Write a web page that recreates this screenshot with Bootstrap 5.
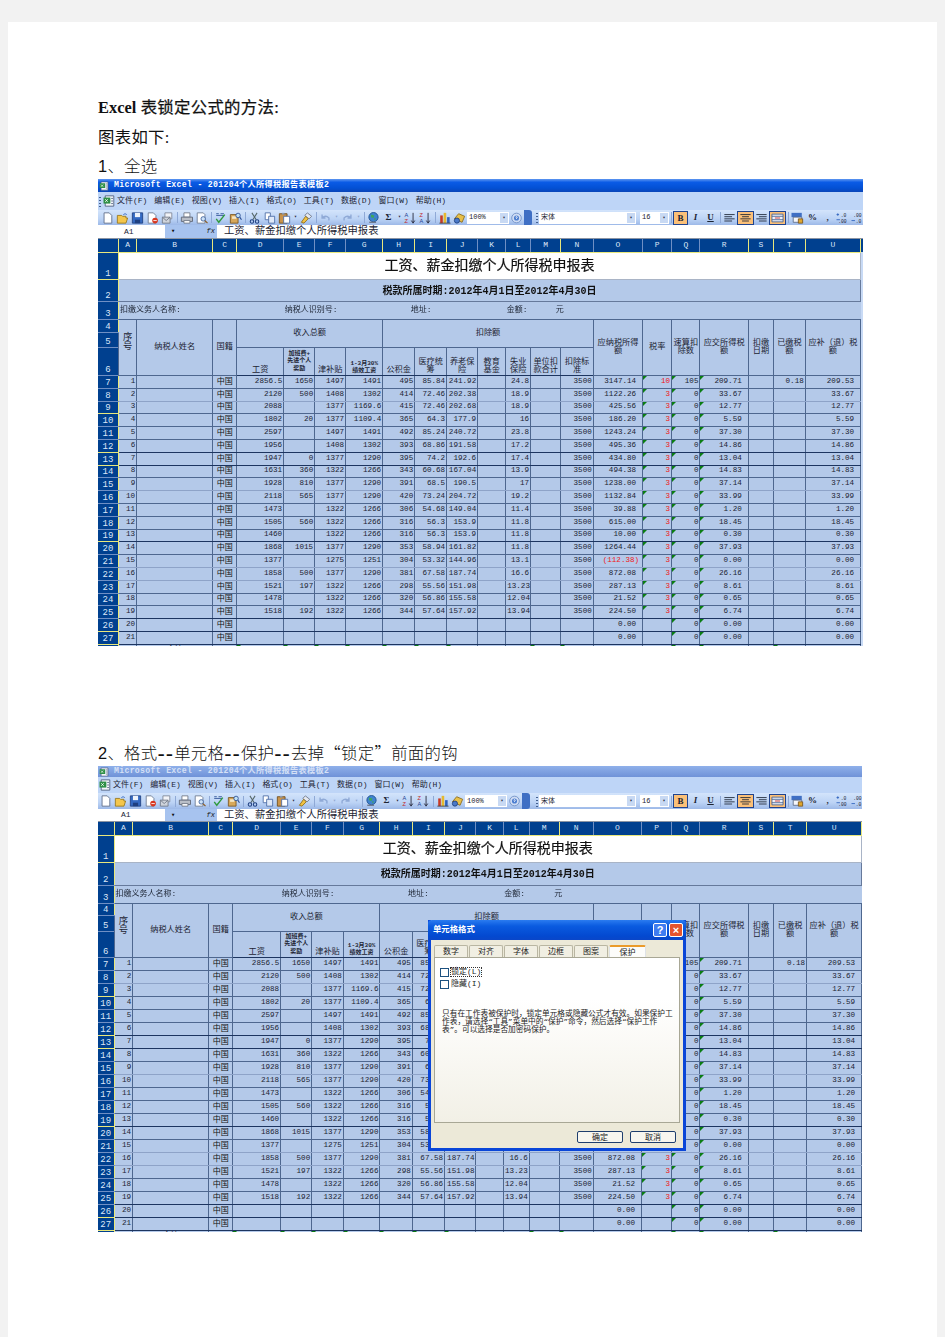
<!DOCTYPE html>
<html lang="zh-CN">

<head>
    <meta charset="UTF-8">
    <meta name="viewport" content="width=device-width, initial-scale=1.0">
    <title>Excel表锁定公式的方法</title>

    <link rel="stylesheet" href="https://cdn.jsdelivr.net/npm/bootstrap@5.3.0/dist/css/bootstrap.min.css">

    <style>
        body {
            background-color: #f2f2f2;
            font-family: "Liberation Serif", "Noto Sans CJK SC", serif;
            color: #111;
        }

        .doc-page {
            margin: 22px 8px 0;
            padding: 71px 0 0 90px;
            min-height: 1315px;
        }

        .doc-line {
            font-size: 16.4px;
            line-height: 30px;
            letter-spacing: .3px;
            margin: 0;
        }

        .doc-line b {
            letter-spacing: 0;
        }

        .doc-heavy {
            -webkit-text-stroke: .25px #111;
        }

        .doc-step {
            line-height: 26px;
            font-family: "Liberation Sans", "Noto Sans CJK SC", sans-serif;
            font-weight: 300;
        }

        .doc-gap {
            margin-top: 93px;
        }

        .doc-dash {
            font-size: 22px;
            line-height: 0;
            letter-spacing: 1px;
            vertical-align: -2px;
        }

        .doc-cjk {
            font-family: "Noto Sans CJK SC", sans-serif;
        }

        /* the two pasted screenshots */
        .xl-shot {
            width: 765px;
            height: 467px;
            font-family: "Liberation Mono", "Noto Sans CJK SC", monospace;
            font-size: 8px;
            line-height: 1;
            color: #1c2433;
            filter: blur(0.3px);
        }

        .xl-shot-b {
            width: 764px;
            height: 466px;
        }

        .xl-title {
            height: 13px;
            padding-left: 1px;
            background: linear-gradient(#5f97f0, #0a5be6 25%, #0350d4 70%, #0a45b8);
            color: #fff;
            font-weight: 700;
            font-size: 8.2px;
            letter-spacing: .3px;
        }

        .xl-shot-b .xl-title {
            height: 11px;
            background: linear-gradient(#8fb0ea, #6f92d8);
            color: #d5e0f6;
        }

        .xl-menu {
            height: 18px;
            background: #bed5f7;
        }

        .xl-shot-b .xl-menu {
            height: 16px;
        }

        .xl-shot-b .xl-menu .xl-grip {
            display: none;
        }

        .xl-menu-item {
            width: 37.35px;
            flex: none;
            white-space: nowrap;
        }

        .xl-tools {
            height: 15px;
            background: linear-gradient(#d3e4fb, #bcd3f5 60%, #9db9e8);
        }

        .xl-shot-b .xl-tools {
            height: 16px;
        }

        .xl-tl {
            width: 437px;
            padding-left: 2px;
            flex: none;
        }

        .xl-shot-b .xl-tl {
            padding-left: 0;
        }

        .xl-ic {
            width: 15px;
            height: 12px;
            flex: none;
        }

        .xl-dd {
            width: 7px;
            flex: none;
            text-align: center;
            font-size: 5px;
            color: #223;
        }

        .xl-off {
            color: #8ea6cf;
        }

        .xl-sep {
            width: 4px;
            height: 11px;
            flex: none;
            background: linear-gradient(#8fa9d6, #8fa9d6) center/1px 100% no-repeat;
        }

        .xl-box {
            height: 12px;
            flex: none;
            background: #fff;
            padding-left: 2px;
            font-size: 7px;
        }

        .xl-box i {
            width: 8px;
            height: 10px;
            margin-left: auto;
            margin-right: 1px;
            background: #c8d9f3;
            font-style: normal;
            font-size: 5px;
            text-align: center;
            line-height: 10px;
        }

        .xl-chev {
            width: 8px;
            height: 16px;
            flex: none;
            background: #3f6fc4;
            border-radius: 0 3px 3px 0;
        }

        .xl-grip {
            width: 4px;
            height: 11px;
            flex: none;
            background: radial-gradient(circle, #44608f 0.7px, transparent 1px) center top/2px 3px repeat-y;
        }

        .xl-tb {
            width: 15px;
            height: 14px;
            flex: none;
            text-align: center;
            font: 700 9px/13px "Liberation Serif", serif;
            color: #1c2433;
        }

        .xl-on {
            background: #fbc078;
            border: 1px solid #20448f;
        }

        .xl-formula {
            height: 14px;
            background: #fff;
            border-bottom: 1px solid #8b94a3;
        }

        .xl-shot-b .xl-formula {
            height: 13px;
        }

        .xl-name {
            width: 67px;
            padding-left: 26px;
            font-size: 8px;
            flex: none;
        }

        .xl-shot-b .xl-name {
            padding-left: 23px;
        }

        .xl-fx {
            width: 52px;
            flex: none;
            height: 100%;
            background: #a7c3ef;
            padding: 0 2px 0 6px;
            font-size: 7px;
            font-style: italic;
            color: #111;
        }

        .xl-ftext {
            padding-left: 7px;
            font-size: 10.3px;
            font-family: "Liberation Sans", "Noto Sans CJK SC", sans-serif;
            white-space: nowrap;
        }

        /* sheet grid */
        .xl-grid {
            table-layout: fixed;
            width: 100%;
            background: #b4c9e9;
        }

        .xl-grid td {
            padding: 0 1px;
            border: 1px solid #4e678f;
            overflow: hidden;
            white-space: nowrap;
            text-align: right;
            position: relative;
            font-size: 7.6px;
        }

        .xl-grid th {
            padding: 0;
            background: #00408f;
            color: #dbe6f7;
            font-weight: 400;
            font-size: 8px;
            text-align: center;
            overflow: hidden;
        }

        .xl-letter {
            border-right: 1px solid #6f8fc4;
            border-bottom: 1px solid #e9e87c;
        }

        .xl-hot {
            border-right-color: #e9e87c;
        }

        .xl-rh {
            border-right: 1px solid #e9e87c;
            border-bottom: 1px solid #6f8fc4;
            font-size: 9px !important;
            vertical-align: bottom;
        }

        .xl-rh.xl-hot {
            border-bottom-color: #e9e87c;
        }

        .xl-grid td.xl-tail {
            background: #c8daf5;
            border: 0;
            padding: 0;
        }

        .xl-grid td.xl-head {
            text-align: center;
            font-size: 8.2px;
            white-space: normal;
        }

        .xl-grid td.xl-seq {
            font-size: 9.4px;
            padding: 13px 0 0;
            vertical-align: top;
        }

        .xl-grid td.xl-low {
            vertical-align: bottom;
        }

        .xl-grid td.xl-tiny {
            font-size: 6px;
            font-weight: 700;
            line-height: 1.2;
            padding: 0;
        }

        .xl-grid td.xl-banner {
            background: #fff;
            text-align: center;
            font-size: 14px;
            border-color: #a9b4c6;
            color: #111;
            -webkit-text-stroke: .2px #111;
        }

        .xl-grid td.xl-period {
            text-align: center;
            font-size: 10px;
            font-weight: 700;
            border-color: #66799b;
            color: #111;
            padding-top: 3px;
        }

        .xl-grid td.xl-info {
            text-align: left;
            font-size: 8px;
            border-left: 0;
            border-right: 0;
        }

        .xl-grid td.xl-indent-a {
            padding-left: 28px;
        }

        .xl-grid td.xl-indent-b {
            padding-left: 25px;
        }

        .xl-grid td.xl-cn {
            text-align: center;
            font-size: 8px;
            color: #111;
        }

        .xl-grid td.xl-pad {
            padding-right: 6px;
        }

        .xl-grid td.xl-paren {
            padding-right: 3px;
        }

        .xl-grid td.xl-red {
            color: #f01818;
        }

        .xl-grid td.xl-mark::before {
            content: "";
            position: absolute;
            left: 0;
            top: 0;
            border: 2px solid transparent;
            border-color: #0a7d12 transparent transparent #0a7d12;
        }

        .xl-line-dark td {
            border-bottom-color: #1d3560;
        }

        .xl-line-pale td {
            border-bottom-color: #8ea3c8;
        }

        /* cell format dialog */
        .xl-dialog {
            left: 330px;
            top: 154px;
            width: 258px;
            height: 231px;
            background: #ece9d8;
            border: 3px solid #0a46d8;
            border-top: 0;
            color: #222;
        }

        .xl-dlg-title {
            height: 20px;
            margin: 0 -3px;
            padding: 0 3px 0 5px;
            border-radius: 4px 4px 0 0;
            background: linear-gradient(#2a7bf0, #0a5be0 30%, #0349d0 80%, #0a46c8);
            color: #fff;
            font-weight: 700;
            font-size: 8.4px;
        }

        .xl-dlg-btn {
            width: 14px;
            height: 14px;
            border: 1px solid #fff;
            border-radius: 2px;
            margin-left: 2px;
            background: #3f7cf0;
            text-align: center;
            font: 700 11px/12px "Liberation Sans", sans-serif;
        }

        .xl-dlg-x {
            background: #e5552e;
        }

        .xl-dialog .nav-tabs {
            margin: 5px 3px 0 3px;
            border-bottom: 0;
            gap: 1px;
        }

        .xl-dialog .nav-link {
            width: 34px;
            height: 12px;
            padding: 0;
            margin: 0;
            border: 1px solid #b9b6a2;
            border-bottom: 0;
            border-radius: 2px 2px 0 0;
            background: #f1efe3;
            color: #222;
            font-size: 8px;
            line-height: 11px;
            text-align: center;
        }

        .xl-dialog .nav-link.active {
            width: 37px;
            background: #fcfcfa;
            border-top: 2px solid #ea9b2b;
            color: #222;
        }

        .xl-panel {
            height: 166px;
            margin: 0 3px;
            padding: 8px 4px 0 5px;
            border: 1px solid #a8a795;
            background: linear-gradient(#fff, #fff 25%, #f2f0e6);
        }

        .xl-check {
            height: 12px;
            font-size: 8px;
        }

        .xl-check .form-check-input {
            width: 9px;
            height: 9px;
            margin: 0 2px 0 0;
            border: 1px solid #1c5180;
            border-radius: 0;
        }

        .xl-dashed {
            outline: 1px dotted #333;
        }

        .xl-note {
            margin: 20px 0 0 2px;
            font-size: 7.7px;
            line-height: 1.05;
            white-space: normal;
        }

        .xl-dlg-foot {
            margin: 8px 7px 0 3px;
            gap: 7px;
        }

        .xl-dlg-foot .btn {
            width: 46px;
            height: 12px;
            padding: 0;
            font-size: 8px;
            line-height: 9px;
            background: #f7f6ef;
            color: #222;
            border: 1px solid #1f3f6e;
            border-radius: 2px;
        }
    </style>
</head>

<body>

    <svg width="0" height="0" class="position-absolute">
        <defs>
            <symbol id="i-new" viewBox="0 0 16 14"><path d="M4 1h6l3 3v9H4z" fill="#fff" stroke="#5b6a86"/></symbol>
            <symbol id="i-open" viewBox="0 0 16 14"><path d="M2 4h5l1 1h4v2h2l-2 6H2z" fill="#f4c64c" stroke="#96761c"/><path d="M9 3q2-2 4 0" fill="none" stroke="#2e62bd"/></symbol>
            <symbol id="i-save" viewBox="0 0 16 14"><path d="M2 1h12v12H2z" fill="#3469c2" stroke="#1e3f80"/><path d="M5 1h6v5H5z" fill="#eef3fb"/><path d="M5 9h6v4H5z" fill="#1e3f80"/></symbol>
            <symbol id="i-perm" viewBox="0 0 16 14"><path d="M3 1h6l3 3v9H3z" fill="#fff" stroke="#6b7890"/><circle cx="11" cy="10" r="3.3" fill="#d8361f"/><path d="M9 10h4" stroke="#fff"/></symbol>
            <symbol id="i-mail" viewBox="0 0 16 14"><path d="M5 1h8v7H5z" fill="#f2f4f8" stroke="#7e8796"/><path d="M2 6h9v7H2z" fill="#cfd4dc" stroke="#6f7785"/><path d="M2 6l4.5 4L11 6" fill="none" stroke="#6f7785"/></symbol>
            <symbol id="i-print" viewBox="0 0 16 14"><path d="M5 1h7v5H5z" fill="#fff" stroke="#6f7785"/><path d="M2 6h13v5H2z" fill="#b9bec7" stroke="#5c6473"/><path d="M5 10h7v3H5z" fill="#fff" stroke="#6f7785"/></symbol>
            <symbol id="i-preview" viewBox="0 0 16 14"><path d="M3 1h7l2 2v10H3z" fill="#fff" stroke="#6b7890"/><circle cx="10" cy="8" r="2.6" fill="#cfe3f7" stroke="#3b5f9b"/><path d="M12 10l3 3" stroke="#8b5a1f" stroke-width="1.4"/></symbol>
            <symbol id="i-spell" viewBox="0 0 16 14"><path d="M3 2h3M8 2h4M3 4h9" stroke="#2b4f94"/><path d="M3 8l3 4 7-9" fill="none" stroke="#2f9a3d" stroke-width="1.6"/></symbol>
            <symbol id="i-research" viewBox="0 0 16 14"><path d="M2 3h9v10H2z" fill="#d7a85a" stroke="#7a5520"/><path d="M4 5h5v3H4z" fill="#f5e7c5"/><circle cx="11" cy="4" r="2.6" fill="#bfe0f5" stroke="#2b4f94"/><path d="M13 6l2 3" stroke="#2b4f94" stroke-width="1.3"/></symbol>
            <symbol id="i-cut" viewBox="0 0 16 14"><path d="M5 1l5 8M11 1L6 9" stroke="#566" stroke-width="1.2"/><circle cx="5" cy="11" r="2" fill="none" stroke="#1e3f80" stroke-width="1.2"/><circle cx="11" cy="11" r="2" fill="none" stroke="#1e3f80" stroke-width="1.2"/></symbol>
            <symbol id="i-copy" viewBox="0 0 16 14"><path d="M3 1h6v8H3z" fill="#fff" stroke="#4a6aa5"/><path d="M7 5h7v8H7z" fill="#dfe9f8" stroke="#4a6aa5"/></symbol>
            <symbol id="i-paste" viewBox="0 0 16 14"><path d="M2 2h9v11H2z" fill="#c9934a" stroke="#6f4d1b"/><path d="M5 1h3v2H5z" fill="#8d99ad"/><path d="M7 5h7v8H7z" fill="#fff" stroke="#4a6aa5"/></symbol>
            <symbol id="i-painter" viewBox="0 0 16 14"><path d="M9 1l5 4-3 3-5-4z" fill="#e5e8ef" stroke="#6a7589"/><path d="M7 5l3 3-5 5-3-1z" fill="#f0c142" stroke="#8f6e1a"/></symbol>
            <symbol id="i-undo" viewBox="0 0 16 14"><path d="M4 3v4h4M4 7q4-4 8 0v3" fill="none" stroke="#8fa9d6" stroke-width="1.6"/></symbol>
            <symbol id="i-redo" viewBox="0 0 16 14"><path d="M12 3v4H8M12 7q-4-4-8 0v3" fill="none" stroke="#8fa9d6" stroke-width="1.6"/></symbol>
            <symbol id="i-globe" viewBox="0 0 16 14"><circle cx="8" cy="6" r="5.4" fill="#3f83d0" stroke="#1e4f8f"/><path d="M5 3l4 1-1 3-3-1zM9 7l2 1-2 2z" fill="#3fa65a"/><path d="M3 12h8" stroke="#6a7589" stroke-width="1.5"/></symbol>
            <symbol id="i-az" viewBox="0 0 16 14"><text x="1" y="6" font-size="6.5" fill="#1f3f8f" font-family="Liberation Sans">A</text><text x="1" y="13" font-size="6.5" fill="#c02828" font-family="Liberation Sans">Z</text><path d="M11 1v11M9 10l2 3 2-3" fill="none" stroke="#223"/></symbol>
            <symbol id="i-za" viewBox="0 0 16 14"><text x="1" y="6" font-size="6.5" fill="#c02828" font-family="Liberation Sans">Z</text><text x="1" y="13" font-size="6.5" fill="#1f3f8f" font-family="Liberation Sans">A</text><path d="M11 1v11M9 10l2 3 2-3" fill="none" stroke="#223"/></symbol>
            <symbol id="i-chart" viewBox="0 0 16 14"><path d="M3 4h3v9H3z" fill="#c93a24"/><path d="M7 1h3v12H7z" fill="#e5b92f"/><path d="M11 6h3v7h-3z" fill="#2e62bd"/><path d="M2 13h13" stroke="#444"/></symbol>
            <symbol id="i-draw" viewBox="0 0 16 14"><path d="M2 8l5-6 7 3-3 7z" fill="#e8c04a" stroke="#8a6a1a"/><circle cx="5" cy="10" r="3" fill="#4a79c8" stroke="#1e3f80"/></symbol>
            <symbol id="i-help" viewBox="0 0 16 14"><circle cx="8" cy="7" r="5.6" fill="#cfdcf3" stroke="#6f8fc4"/><circle cx="8" cy="7" r="3" fill="#4d7ed0"/><path d="M7 6q1-1.4 2 0l-1 1v1" stroke="#fff" fill="none"/></symbol>
            <symbol id="i-left" viewBox="0 0 16 14"><path d="M2 3h12M2 5.5h9M2 8h12M2 10.5h9" stroke="#1c2433"/></symbol>
            <symbol id="i-center" viewBox="0 0 16 14"><path d="M2 3h12M4 5.5h8M2 8h12M4 10.5h8" stroke="#1c2433"/></symbol>
            <symbol id="i-right" viewBox="0 0 16 14"><path d="M2 3h12M5 5.5h9M2 8h12M5 10.5h9" stroke="#1c2433"/></symbol>
            <symbol id="i-merge" viewBox="0 0 16 14"><path d="M1.5 2.5h13v9h-13z" fill="#eef3fb" stroke="#44608f"/><path d="M1.5 5h13M1.5 9h13" stroke="#44608f"/><path d="M5 7h6" stroke="#c02828"/></symbol>
            <symbol id="i-format" viewBox="0 0 16 14"><path d="M1 1h12v5H1z" fill="#3f6fc4"/><path d="M3 6h10v6H3z" fill="#f4f6fb" stroke="#5b6a86"/><path d="M9 8h5v5H9z" fill="#e0a72e" stroke="#7a5520"/></symbol>
            <symbol id="i-inc" viewBox="0 0 16 14"><path d="M4 3h-3M2.5 1.5v3" stroke="#2e62bd"/><path d="M1 9h4" stroke="#2e62bd"/><text x="6" y="6" font-size="5.5" fill="#223" font-family="Liberation Mono">.0</text><text x="3" y="13" font-size="5.5" fill="#223" font-family="Liberation Mono">.00</text></symbol>
            <symbol id="i-dec" viewBox="0 0 16 14"><path d="M1 10h4" stroke="#2e62bd"/><text x="3" y="6" font-size="5.5" fill="#223" font-family="Liberation Mono">.00</text><text x="6" y="13" font-size="5.5" fill="#223" font-family="Liberation Mono">.0</text></symbol>
            <symbol id="i-book" viewBox="0 0 16 14"><path d="M3 1h10v12H3z" fill="#f3f6fb" stroke="#4a5a78"/><path d="M1 3h8v7H1z" fill="#2f8f46"/><path d="M3 5l3 3M6 5L3 8" stroke="#fff"/><path d="M10 4h2M10 7h2M10 10h2" stroke="#4a5a78"/></symbol>
        </defs>
    </svg>

    <div class="doc-page bg-white">
        <p class="doc-line"><b>Excel</b> <span class="doc-heavy">表锁定公式的方法:</span></p>
        <p class="doc-line">图表如下:</p>
        <p class="doc-line doc-step">1、全选</p>
        <div id="sheet-one"></div>
        <p class="doc-line doc-step doc-gap">2、格式<span class="doc-dash">--</span>单元格<span class="doc-dash">--</span>保护<span class="doc-dash">--</span>去掉<span class="doc-cjk">“</span>锁定<span class="doc-cjk">”</span>前面的钩</p>
        <div id="sheet-two"></div>
    </div>

    <script>
        const people = [
            '1|2856.5|1650|1497|1491|495|85.84|241.92||24.8||3500|3147.14|10|105|209.71||0.18|209.53',
            '2|2120|500|1408|1302|414|72.46|202.38||18.9||3500|1122.26|3|0|33.67|||33.67',
            '3|2088||1377|1169.6|415|72.46|202.68||18.9||3500|425.56|3|0|12.77|||12.77',
            '4|1802|20|1377|1109.4|365|64.3|177.9||16||3500|186.20|3|0|5.59|||5.59',
            '5|2597||1497|1491|492|85.24|240.72||23.8||3500|1243.24|3|0|37.30|||37.30',
            '6|1956||1408|1302|393|68.86|191.58||17.2||3500|495.36|3|0|14.86|||14.86',
            '7|1947|0|1377|1290|395|74.2|192.6||17.4||3500|434.80|3|0|13.04|||13.04',
            '8|1631|360|1322|1266|343|60.68|167.04||13.9||3500|494.38|3|0|14.83|||14.83',
            '9|1928|810|1377|1290|391|68.5|190.5||17||3500|1238.00|3|0|37.14|||37.14',
            '10|2118|565|1377|1290|420|73.24|204.72||19.2||3500|1132.84|3|0|33.99|||33.99',
            '11|1473||1322|1266|306|54.68|149.04||11.4||3500|39.88|3|0|1.20|||1.20',
            '12|1505|560|1322|1266|316|56.3|153.9||11.8||3500|615.00|3|0|18.45|||18.45',
            '13|1460||1322|1266|316|56.3|153.9||11.8||3500|10.00|3|0|0.30|||0.30',
            '14|1868|1015|1377|1290|353|58.94|161.82||11.8||3500|1264.44|3|0|37.93|||37.93',
            '15|1377||1275|1251|304|53.32|144.96||13.1||3500|(112.38)|3|0|0.00|||0.00',
            '16|1858|500|1377|1290|381|67.58|187.74||16.6||3500|872.08|3|0|26.16|||26.16',
            '17|1521|197|1322|1266|298|55.56|151.98||13.23||3500|287.13|3|0|8.61|||8.61',
            '18|1478||1322|1266|320|56.86|155.58||12.04||3500|21.52|3|0|0.65|||0.65',
            '19|1518|192|1322|1266|344|57.64|157.92||13.94||3500|224.50|3|0|6.74|||6.74',
            '20||||||||||||0.00||0|0.00|||0.00',
            '21||||||||||||0.00||0|0.00|||0.00'
        ];
        const letters = 'ABCDEFGHIJKLMNOPQRSTU'.split('');
        const menus = ['文件(F)', '编辑(E)', '视图(V)', '插入(I)', '格式(O)', '工具(T)', '数据(D)', '窗口(W)', '帮助(H)'];

        const ic = name => `<svg class="xl-ic"><use href="#i-${name}"/></svg>`;
        const dd = (off) => `<span class="xl-dd${off ? ' xl-off' : ''}">▾</span>`;
        const sep = '<span class="xl-sep"></span>';
        const tb = (txt, on) => `<span class="xl-tb${on ? ' xl-on' : ''}">${txt}</span>`;

        function toolbar() {
            return `
                <div class="xl-tools d-flex align-items-center overflow-hidden">
                    <div class="xl-tl d-flex align-items-center">
                        ${ic('new')}${ic('open')}${ic('save')}${ic('perm')}${ic('mail')}${sep}
                        ${ic('print')}${ic('preview')}${sep}${ic('spell')}${ic('research')}${sep}
                        ${ic('cut')}${ic('copy')}${ic('paste')}${dd()}${ic('painter')}${sep}
                        ${ic('undo')}${dd(1)}${ic('redo')}${dd(1)}${sep}
                        ${ic('globe')}${tb('Σ')}${dd()}${ic('az')}${ic('za')}${sep}${ic('chart')}${ic('draw')}
                        <span class="xl-box d-flex align-items-center" style="width:42px">100%<i>▾</i></span>
                        ${ic('help')}<span class="xl-chev"></span>
                    </div>
                    <span class="xl-grip"></span>
                    <span class="xl-box d-flex align-items-center" style="width:97px">宋体<i>▾</i></span>
                    <span class="xl-box d-flex align-items-center ms-1" style="width:29px">16<i>▾</i></span>
                    ${sep}${tb('B', 1)}${tb('<i>I</i>')}${tb('<u>U</u>')}${sep}
                    ${ic('left')}<span class="xl-on d-flex">${ic('center')}</span>${ic('right')}
                    <span class="xl-on d-flex">${ic('merge')}</span>${sep}
                    ${ic('format')}${tb('%')}${tb(',')}${ic('inc')}${ic('dec')}${sep}
                </div>`;
        }

        function grid(edges, heads, rowH) {
            const widths = edges.map((e, i) => e - (i ? edges[i - 1] : 98));
            const hotLetters = 'ABCGHIMRSTU';
            const hotRows = [1, 9, 12, 13, 19, 26, 27];
            const darkLines = [6, 12, 13, 19, 25, 26, 27];
            const paleLines = [8, 15, 21, 22];

            const rh = n => `<th class="xl-rh${hotRows.includes(n) ? ' xl-hot' : ''}">${n}</th>`;
            const tail = '<td class="xl-tail"></td>';
            const h = n => `style="height:${rowH[n]}px"`;

            let html = `<table class="xl-grid"><colgroup>${widths.map(w => `<col style="width:${w.toFixed(1)}px">`).join('')}</colgroup><tbody>`;

            html += `<tr ${h(0)}><th class="xl-letter xl-hot"></th>${letters.map(l =>
                `<th class="xl-letter${hotLetters.includes(l) ? ' xl-hot' : ''}">${l}</th>`).join('')}<th></th></tr>`;
            html += `<tr ${h(1)}>${rh(1)}<td colspan="21" class="xl-banner">工资、薪金扣缴个人所得税申报表</td>${tail}</tr>`;
            html += `<tr ${h(2)}>${rh(2)}<td colspan="21" class="xl-period">税款所属时期:2012年4月1日至2012年4月30日</td>${tail}</tr>`;
            html += `<tr ${h(3)}>${rh(3)}
                <td colspan="4" class="xl-info">扣缴义务人名称:</td>
                <td colspan="3" class="xl-info">纳税人识别号:</td>
                <td colspan="4" class="xl-info xl-indent-a">地址:</td>
                <td class="xl-info">金额:</td>
                <td colspan="9" class="xl-info xl-indent-b">元</td>${tail}</tr>`;
            html += `<tr ${h(4)}>${rh(4)}
                <td rowspan="3" class="xl-head xl-seq">序<br>号</td>
                <td rowspan="3" class="xl-head">纳税人姓名</td>
                <td rowspan="3" class="xl-head">国籍</td>
                <td rowspan="2" colspan="4" class="xl-head">收入总额</td>
                <td rowspan="2" colspan="7" class="xl-head">扣除额</td>
                ${heads.map(t => `<td rowspan="3" class="xl-head">${t}</td>`).join('')}${tail}</tr>`;
            html += `<tr ${h(5)}>${rh(5)}${tail}</tr>`;
            html += `<tr ${h(6)} class="xl-line-dark">${rh(6)}
                <td class="xl-head xl-low">工资</td>
                <td class="xl-head xl-tiny">加班费+<br>先进个人<br>奖励</td>
                <td class="xl-head xl-low">津补贴</td>
                <td class="xl-head xl-tiny xl-low">1-3月30%<br>绩效工资</td>
                <td class="xl-head xl-low">公积金</td>
                <td class="xl-head xl-low">医疗统<br>筹</td>
                <td class="xl-head xl-low">养老保<br>险</td>
                <td class="xl-head xl-low">教育<br>基金</td>
                <td class="xl-head xl-low">失业<br>保险</td>
                <td class="xl-head xl-low">单位扣<br>款合计</td>
                <td class="xl-head xl-low">扣除标<br>准</td>${tail}</tr>`;

            people.forEach((line, i) => {
                const v = line.split('|');
                const n = i + 7;
                const cls = darkLines.includes(n) ? 'xl-line-dark' : paleLines.includes(n) ? 'xl-line-pale' : '';
                const cell = (k, c) => `<td class="${c || ''}">${v[k] || ''}</td>`;
                html += `<tr ${h(n)} class="${cls}">${rh(n)}${cell(0)}<td></td><td class="xl-cn">中国</td>
                    ${[1, 2, 3, 4, 5, 6, 7, 8, 9, 10, 11].map(k => cell(k)).join('')}
                    ${cell(12, v[12].startsWith('(') ? 'xl-paren xl-red' : 'xl-pad')}
                    ${cell(13, 'xl-red' + (v[13] ? ' xl-mark' : ''))}
                    ${cell(14, 'xl-mark')}${cell(15, 'xl-mark xl-pad')}${cell(16)}${cell(17)}${cell(18, 'xl-pad')}${tail}</tr>`;
            });

            // row 28 is cut off at the bottom of the screenshot
            const marks = 'DEFGHIJMNQRT';
            html += `<tr style="height:13px">${rh(28)}${letters.map(l =>
                `<td class="${marks.includes(l) ? 'xl-mark' : ''}">${l === 'B' ? '<span class="d-block text-center">合计</span>' : ''}</td>`).join('')}${tail}</tr>`;
            return html + '</tbody></table>';
        }

        function shot(opts) {
            return `
                <div class="xl-shot ${opts.extra} position-relative overflow-hidden">
                    <div class="xl-title d-flex align-items-center gap-1">
                        <svg width="11" height="10" viewBox="0 0 16 14"><use href="#i-book"/></svg>
                        <span>Microsoft Excel - 201204个人所得税报告表模板2</span>
                    </div>
                    <div class="xl-menu d-flex align-items-center">
                        <span class="xl-grip"></span>${ic('book')}
                        ${menus.map(m => `<span class="xl-menu-item">${m}</span>`).join('')}
                    </div>
                    ${toolbar()}
                    <div class="xl-formula d-flex align-items-center">
                        <div class="xl-name">A1</div>
                        <div class="xl-fx d-flex align-items-center justify-content-between"><span>▾</span><span>fx</span></div>
                        <div class="xl-ftext">工资、薪金扣缴个人所得税申报表</div>
                    </div>
                    ${grid(opts.edges, opts.heads, opts.rowH)}
                    ${opts.dialog || ''}
                </div>`;
        }

        const rightHeads = ['应纳税所得<br>额', '税率', '速算扣<br>除数', '应交所得税<br>额', '扣缴<br>日期', '已缴税<br>额', '应补（退）税<br>额'];

        function rowHeights(top, rest) {
            // keep the sub pixel row height without drifting
            const out = top.slice();
            let y = 0;
            for (let i = 0; i < 21; i++) {
                const next = Math.round((i + 1) * rest);
                out.push(next - y);
                y = next;
            }
            return out;
        }

        const dialog = `
            <div class="xl-dialog position-absolute">
                <div class="xl-dlg-title d-flex align-items-center">
                    <span class="me-auto">单元格格式</span>
                    <span class="xl-dlg-btn">?</span><span class="xl-dlg-btn xl-dlg-x">×</span>
                </div>
                <ul class="nav nav-tabs">
                    <li class="nav-item"><span class="nav-link">数字</span></li>
                    <li class="nav-item"><span class="nav-link">对齐</span></li>
                    <li class="nav-item"><span class="nav-link">字体</span></li>
                    <li class="nav-item"><span class="nav-link">边框</span></li>
                    <li class="nav-item"><span class="nav-link">图案</span></li>
                    <li class="nav-item"><span class="nav-link active">保护</span></li>
                </ul>
                <div class="xl-panel">
                    <div class="xl-check d-flex align-items-center"><input class="form-check-input" type="checkbox"><span class="xl-dashed">锁定(L)</span></div>
                    <div class="xl-check d-flex align-items-center"><input class="form-check-input" type="checkbox"><span>隐藏(I)</span></div>
                    <p class="xl-note">只有在工作表被保护时，锁定单元格或隐藏公式才有效。如果保护工作表，请选择“工具”菜单中的“保护”命令，然后选择“保护工作表”。可以选择是否加密码保护。</p>
                </div>
                <div class="xl-dlg-foot d-flex justify-content-end">
                    <button type="button" class="btn">确定</button>
                    <button type="button" class="btn">取消</button>
                </div>
            </div>`;

        document.getElementById('sheet-one').innerHTML = shot({
            extra: '',
            edges: [118.5, 136.7, 212.7, 236.7, 283.7, 314.7, 345.7, 382.7, 414.7, 446.7, 477.7, 505.7, 530.7, 560.7, 593.3, 642.7, 671.7, 700, 748.3, 773.7, 805.3, 860.7, 863],
            heads: rightHeads,
            rowH: rowHeights([13, 27, 22, 18, 13, 15, 28], 12.8)
        });
        document.getElementById('sheet-two').innerHTML = shot({
            extra: 'xl-shot-b',
            edges: [114, 132.7, 208.7, 232.7, 280.7, 311.7, 343.3, 380, 412.3, 444.7, 476, 503.3, 529.3, 559.3, 593.3, 641.7, 671.7, 700, 748.3, 773.7, 806.7, 861.7, 862],
            heads: rightHeads,
            rowH: rowHeights([13, 27, 23, 18, 12, 16, 26], 13),
            dialog: dialog
        });
    </script>

</body>

</html>
